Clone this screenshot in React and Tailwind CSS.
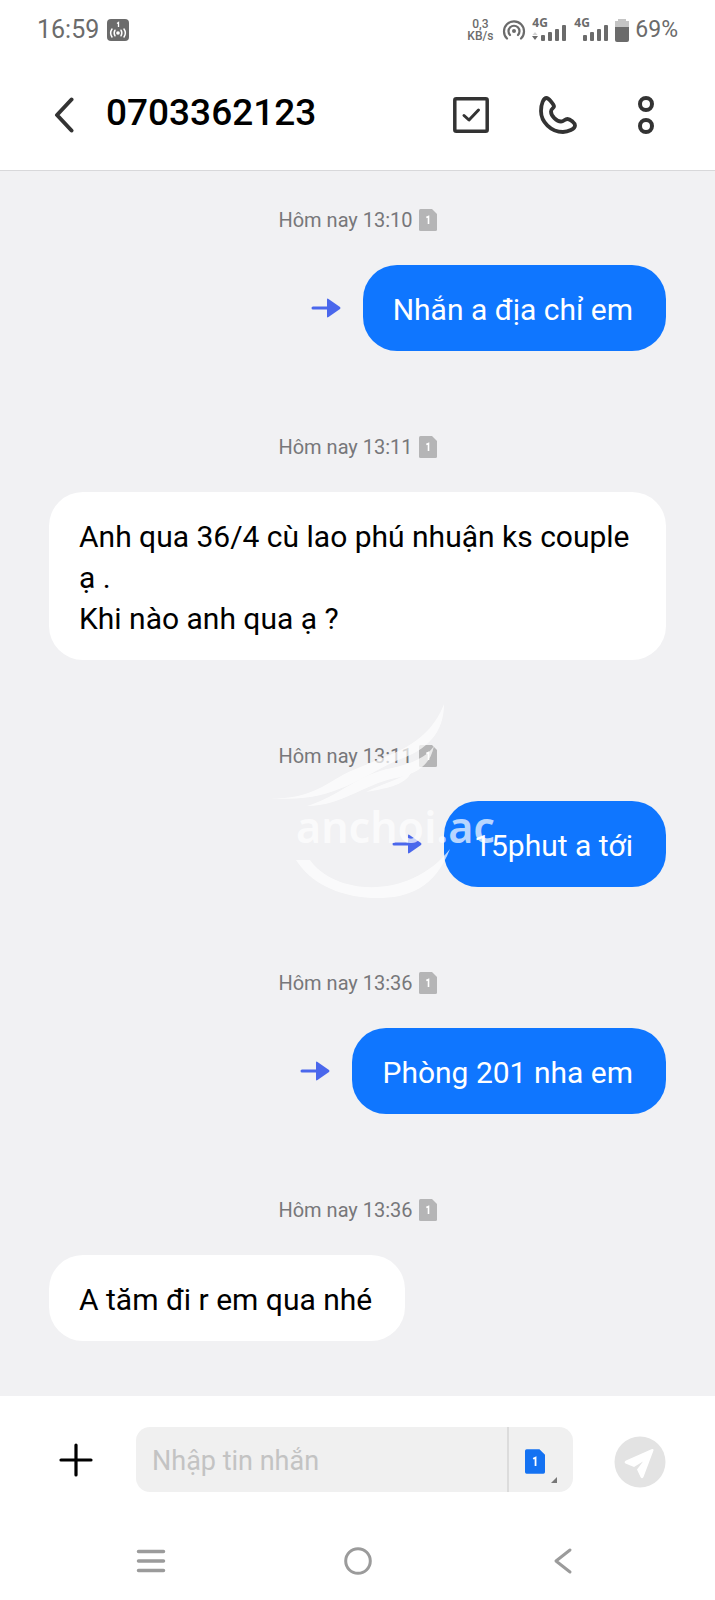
import React from 'react';

const messages = [
  { id: 1, time: 'Hôm nay 13:10', sent: true, text: 'Nhắn a địa chỉ em' },
  { id: 2, time: 'Hôm nay 13:11', sent: false, text: 'Anh qua 36/4 cù lao phú nhuận ks couple ạ .\nKhi nào anh qua ạ ?' },
  { id: 3, time: 'Hôm nay 13:11', sent: true, text: '15phut a tới', watermark: true },
  { id: 4, time: 'Hôm nay 13:36', sent: true, text: 'Phòng 201 nha em' },
  { id: 5, time: 'Hôm nay 13:36', sent: false, text: 'A tăm đi r em qua nhé' },
];

const SimIcon = ({ className }) => (
  <svg viewBox="0 0 18 22" className={className} aria-hidden="true">
    <path d="M1.5 0H13L18 5V20.5Q18 22 16.500 22H1.500Q0 22 0 20.500V1.500Q0 0 1.500 0Z" fill="currentColor" />
    <path d="M7.300 8.500L9.500 7.500V15" fill="none" stroke="#fff" strokeWidth="1.600" />
  </svg>
);

const SignalIcon = ({ data }) => (
  <div className="flex h-[22px] w-[34px] flex-col">
    <span className="font-['Noto_Sans'] text-[12px] leading-[8px] font-bold">4G</span>
    <svg viewBox="0 0 34 16" className="-mt-[2px] h-4 w-[34px]" fill="currentColor" aria-hidden="true">
      {data && <path d="M0 11H6L3 15Z" />}
      {data && <path d="M0.500 10L3 7L5.500 10Z" opacity="0.3" />}
      <rect x="9" y="10" width="4" height="6" rx="1" />
      <rect x="16" y="7" width="4" height="9" rx="1" />
      <rect x="23" y="4" width="4" height="12" rx="1" />
      <rect x="30" y="0" width="4" height="16" rx="1" />
    </svg>
  </div>
);

const StatusBar = () => (
  <div className="flex h-[60px] items-center justify-between px-[37px] text-[#6b6b6b]">
    <div className="flex items-center gap-2">
      <span className="text-[25px] leading-[28px]">16:59</span>
      <svg viewBox="0 0 22 22" className="h-[22px] w-[22px]" fill="none" aria-hidden="true">
        <rect width="22" height="22" rx="4" fill="#6b6b6b" />
        <path d="M10 4.500L11.500 3.500V8" stroke="#fff" strokeWidth="1.300" />
        <circle cx="11" cy="14" r="1.800" fill="#fff" />
        <path d="M8 11.200Q6.300 14 8 16.800M14 11.200Q15.700 14 14 16.800M5 10Q2.300 14 5 18M17 10Q19.700 14 17 18" stroke="#fff" strokeWidth="1.500" strokeLinecap="round" />
      </svg>
    </div>
    <div className="flex items-center">
      <div className="flex w-6 flex-col items-center text-[12px] leading-[12px] font-medium">
        <span>0,3</span>
        <span>KB/s</span>
      </div>
      <svg viewBox="0 0 24 22" className="ml-[10px] h-[22px] w-6" fill="none" stroke="currentColor" strokeWidth="2.200" strokeLinecap="round" aria-hidden="true">
        <path d="M5 19.500A10 10 0 1 1 19 19.500" />
        <path d="M8 16A5.500 5.500 0 1 1 16 16" />
        <circle cx="12" cy="12" r="2" fill="currentColor" stroke="none" />
      </svg>
      <div className="ml-[6px] flex gap-2">
        <SignalIcon data />
        <SignalIcon />
      </div>
      <svg viewBox="0 0 14 23" className="ml-[7px] h-[23px] w-[14px]" fill="currentColor" aria-hidden="true">
        <path d="M3 0H11V2H14V8H0V2H3Z" opacity="0.4" />
        <path d="M0 8H14V21Q14 23 12 23H2Q0 23 0 21Z" />
      </svg>
      <span className="ml-[6px] text-[23px] leading-[28px]">69%</span>
    </div>
  </div>
);

const Header = () => (
  <header className="flex h-[111px] items-center border-b border-[#d8d8da] px-[49px] text-[#333]">
    <button type="button" aria-label="Quay lại" className="flex w-[57px] justify-start pl-1">
      <svg viewBox="0 0 22 36" className="h-9 w-[22px]" fill="none" stroke="currentColor" strokeWidth="4" strokeLinecap="round" strokeLinejoin="round">
        <path d="M18.500 2.500L4 18L18.500 33.500" />
      </svg>
    </button>
    <h1 className="flex-1 pb-1 text-[37px] leading-[44px] font-medium text-black">0703362123</h1>
    <div className="flex items-center">
      <button type="button" aria-label="Chọn" className="mr-[50px]">
        <svg viewBox="0 0 36 36" className="h-9 w-9" fill="none" stroke="currentColor" strokeWidth="3.500" strokeLinecap="round" strokeLinejoin="round">
          <rect x="1.800" y="1.800" width="32.400" height="32.400" rx="1.500" />
          <path d="M11 18.500L16 23L25.500 13" strokeWidth="3" />
        </svg>
      </button>
      <button type="button" aria-label="Gọi" className="mr-[61px]">
        <svg viewBox="0 0 38 38" className="h-[38px] w-[38px]" fill="none" stroke="currentColor" strokeWidth="3.800" strokeLinejoin="round">
          <path d="M7.500 2C9.500 2 15 8.500 15 10.500C15 12 12 12.500 12 15.500C12 20 17.500 25.500 22 25.500C25 25.500 25.500 23 28.500 23C31 23 36 27 36 29.500C36 33 29 36 24 36C12 36 2 26 2 15C2 8 4.500 2 7.500 2Z" />
        </svg>
      </button>
      <button type="button" aria-label="Tùy chọn khác" className="mr-3">
        <svg viewBox="0 0 16 38" className="h-[38px] w-4" fill="none" stroke="currentColor" strokeWidth="4">
          <circle cx="8" cy="8" r="6" />
          <circle cx="8" cy="30" r="6" />
        </svg>
      </button>
    </div>
  </header>
);

const Watermark = () => (
  <svg viewBox="0 0 240 210" className="pointer-events-none absolute -top-[44px] left-1/2 -ml-[88px] h-[210px] w-[240px]" aria-hidden="true">
    <g fill="#fff" opacity="0.7">
      <path d="M1 98C46 100 60 78 88 68C120 54 158 46 174 4C174 32 158 50 128 60C92 76 62 104 1 98Z" />
      <path d="M37 106C70 96 88 74 122 68C140 64 156 58 164 46C160 66 146 74 126 78C94 84 72 106 37 106Z" />
      <path d="M96 92C116 82 130 80 142 70C138 84 120 88 96 92Z" />
      <path d="M26 160H40C66 196 140 200 180 149C164 190 136 199 102 198C66 196 40 182 26 160Z" />
      <text x="26" y="143" fontSize="43" fontWeight="600" fontFamily="Noto Sans, sans-serif">anchoi.ac</text>
    </g>
  </svg>
);

const Message = ({ time, sent, text, watermark }) => (
  <li className="relative">
    <div className="flex h-6 items-center justify-center gap-[6px] text-[20px] leading-[24px] text-[#77777a]">
      <time>{time}</time>
      <SimIcon className="h-[22px] w-[18px] text-[#b5b5b6]" />
    </div>
    <div className={sent ? 'mt-[33px] flex items-center justify-end gap-[22px]' : 'mt-[33px] flex'}>
      {sent && (
        <svg viewBox="0 0 30 20" className="h-5 w-[30px] text-[#4a67ec]" fill="currentColor" aria-hidden="true">
          <path d="M2 10H18" stroke="currentColor" strokeWidth="3" strokeLinecap="round" />
          <path d="M16 1.500Q16 0 17.500 1L29 9Q30 10 29 11L17.500 19Q16 20 16 18.500Z" />
        </svg>
      )}
      <p
        className={
          sent
            ? 'rounded-[34px] bg-[#0f76ff] pt-6 pr-[33px] pb-[21px] pl-[30px] text-[30px] leading-[41px] text-white'
            : 'rounded-[34px] bg-white pt-6 pr-[33px] pb-[21px] pl-[30px] text-[30px] leading-[41px] whitespace-pre-line text-black'
        }
      >
        {text}
      </p>
    </div>
    {watermark && <Watermark />}
  </li>
);

const Composer = () => (
  <form className="flex items-center px-[49px] pt-[31px] pb-[30px]" onSubmit={(e) => e.preventDefault()}>
    <button type="button" aria-label="Thêm" className="mr-[43px] ml-[10px]">
      <svg viewBox="0 0 34 34" className="h-[34px] w-[34px]" stroke="#000" strokeWidth="3.200" strokeLinecap="round">
        <path d="M17 2V32M2 17H32" />
      </svg>
    </button>
    <div className="flex h-[65px] min-w-0 flex-1 overflow-hidden rounded-[14px] bg-[#f0f0f0]">
      <input
        type="text"
        aria-label="Nhập tin nhắn"
        placeholder="Nhập tin nhắn"
        className="min-w-0 flex-1 px-4 pt-1 text-[27px] text-black outline-none placeholder:text-[#c3c3c3]"
      />
      <button type="button" aria-label="Chọn SIM" className="flex w-[66px] items-center gap-[6px] border-l-2 border-[#dcdcdc] pt-1 pl-4">
        <SimIcon className="h-[25px] w-5 text-[#1472f2]" />
        <svg viewBox="0 0 6 6" className="mt-9 h-[6px] w-[6px]">
          <path d="M6 0V6H0Z" fill="#777" />
        </svg>
      </button>
    </div>
    <button type="submit" aria-label="Gửi" className="mt-[5px] ml-[41px]">
      <svg viewBox="0 0 52 52" className="h-[52px] w-[52px]">
        <circle cx="26" cy="26" r="25.500" fill="#e3e3e3" />
        <path d="M38 13Q40 12.500 39.500 14.500L29.500 41Q28 43.500 26.500 41L23 33.500L29 25.500L20 31L11.500 27.500Q9.500 26 12 24.500Z" fill="#fff" />
      </svg>
    </button>
  </form>
);

const NavBar = () => (
  <nav className="flex h-[78px] items-center justify-between px-[136px] text-[#9b9b9b]">
    <button type="button" aria-label="Gần đây">
      <svg viewBox="0 0 30 24" className="h-6 w-[30px]" stroke="currentColor" strokeWidth="3.500" strokeLinecap="round">
        <path d="M2.500 2.500H27.500M2.500 12H27.500M2.500 21.500H27.500" />
      </svg>
    </button>
    <button type="button" aria-label="Màn hình chính">
      <svg viewBox="0 0 28 28" className="h-7 w-7" fill="none" stroke="currentColor" strokeWidth="3">
        <circle cx="14" cy="14" r="12.300" />
      </svg>
    </button>
    <button type="button" aria-label="Trở về" className="flex w-[30px] justify-start pl-1">
      <svg viewBox="0 0 20 28" className="h-7 w-5" fill="none" stroke="currentColor" strokeWidth="3" strokeLinecap="round" strokeLinejoin="round">
        <path d="M17 3L3 14L17 25" />
      </svg>
    </button>
  </nav>
);

const App = () => (
  <div className="flex min-h-screen flex-col bg-white font-[Roboto,sans-serif]">
    <StatusBar />
    <Header />
    <main className="flex-1 bg-[#f1f1f3] px-[49px] pt-[37px] pb-[54px]">
      <ul className="flex flex-col gap-[84px]">
        {messages.map((message) => (
          <Message key={message.id} {...message} />
        ))}
      </ul>
    </main>
    <Composer />
    <NavBar />
  </div>
);

export default App;
